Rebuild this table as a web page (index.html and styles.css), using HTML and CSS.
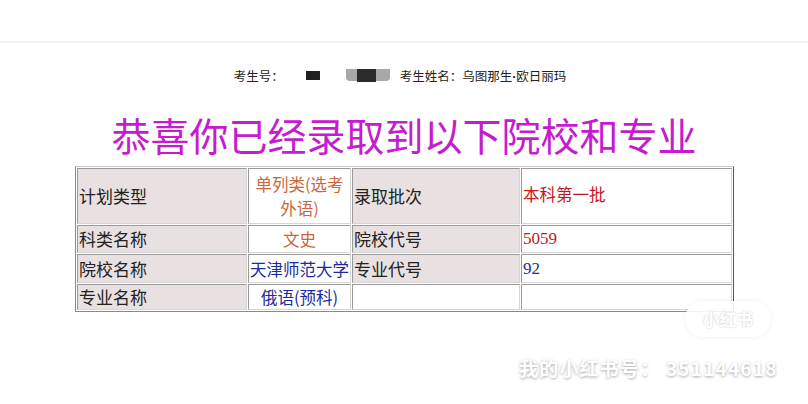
FILE: index.html
```html
<!DOCTYPE html>
<html lang="zh-CN">
<head>
<meta charset="utf-8">
<link rel="stylesheet" href="styles.css">
</head>
<body>
<div class="topbar"></div>
<div class="info">
  <span class="lbl">考生号：</span>
  <span class="redact-a"></span>
  <span class="redact-b"><i></i></span>
  <span class="lbl">考生姓名：乌图那生<span class="dot">·</span>欧日丽玛</span>
</div>
<h1 class="title">恭喜你已经录取到以下院校和专业</h1>
<table class="result">
  <tr class="r1">
    <td class="key w1">计划类型</td>
    <td class="val orange w2">单列类(选考外语)</td>
    <td class="key w3">录取批次</td>
    <td class="val2 red w4">本科第一批</td>
  </tr>
  <tr class="r2">
    <td class="key">科类名称</td>
    <td class="val orange">文史</td>
    <td class="key">院校代号</td>
    <td class="val2 red num">5059</td>
  </tr>
  <tr class="r3">
    <td class="key">院校名称</td>
    <td class="val blue">天津师范大学</td>
    <td class="key">专业代号</td>
    <td class="val2 blue num">92</td>
  </tr>
  <tr class="r4">
    <td class="key">专业名称</td>
    <td class="val blue">俄语(预科)</td>
    <td class="val"></td>
    <td class="val2"></td>
  </tr>
</table>
<div class="wm-pill">小红书</div>
<div class="wm-text">我的小红书号： 351144618</div>
</body>
</html>
```

FILE: styles.css
```css
html, body {
  margin: 0;
  padding: 0;
  background: #fff;
}
body {
  width: 808px;
  height: 404px;
  overflow: hidden;
  position: relative;
  font-family: "Liberation Serif", "Noto Sans CJK SC", serif;
}
.topbar {
  height: 41px;
  border-bottom: 2px solid #f2f2f2;
}
.info {
  margin-top: 22px;
  display: flex;
  align-items: center;
  justify-content: center;
  height: 20px;
  font-family: "Noto Sans CJK SC", sans-serif;
  font-size: 12.5px;
  color: #222;
  padding-right: 8px;
}
.lbl { white-space: nowrap; }
.dot {
  font-family: "Liberation Sans", sans-serif;
  font-weight: 700;
}
.redact-a {
  display: inline-block;
  width: 14px;
  height: 9px;
  background: #1e1e1e;
  margin-left: 22px;
}
.redact-b {
  display: inline-block;
  width: 44px;
  height: 12px;
  background: #a8a8a8;
  margin-left: 26px;
  margin-right: 10px;
  position: relative;
  border-radius: 0 0 4px 4px;
}
.redact-b i {
  position: absolute;
  left: 11px;
  top: 0;
  width: 19px;
  height: 13px;
  background: #2c2c2c;
}
.title {
  margin: 21px 0 0 0;
  text-align: center;
  font-family: "Noto Sans CJK SC", sans-serif;
  font-weight: 400;
  font-size: 39px;
  line-height: 56px;
  color: #c51ccf;
}
.result {
  margin: 4px 0 0 75px;
  width: 659px;
  table-layout: fixed;
  border-collapse: separate;
  border-spacing: 1px;
  border: 1px solid;
  border-color: #c8c8c8 #555 #888 #888;
  background: #fff;
  font-size: 16.5px;
}
.result td {
  box-sizing: border-box;
  border: 1px solid;
  border-color: #9a9a9a #d6d6d6 #d6d6d6 #9a9a9a;
  padding: 0 1px;
  line-height: 24px;
  vertical-align: middle;
  overflow: hidden;
}
.result td.w1 { width: 170px; }
.result td.w2 { width: 103px; }
.result td.w3 { width: 168px; }
.result td.w4 { width: 211px; }
.r1 td { height: 56px; }
.r2 td { height: 28px; }
.r3 td { height: 29px; }
.r4 td { height: 26px; }
.key {
  background: #e9e1e1;
  color: #222;
  font-family: "Noto Sans CJK SC", sans-serif;
  font-size: 17px;
}
.val {
  text-align: center;
  font-family: "Noto Sans CJK SC", sans-serif;
}
.val2 {
  text-align: left;
  font-family: "Liberation Serif", "Noto Sans CJK SC", serif;
}
.orange { color: #cc6640; }
.red { color: #c4161c; }
.blue { color: #1c2aa0; }
.num { font-size: 17px; }
.wm-pill {
  position: absolute;
  left: 685px;
  top: 301px;
  width: 86px;
  height: 36px;
  border-radius: 18px;
  background: rgba(255,255,255,0.9);
  box-shadow: 0 0 4px rgba(0,0,0,0.08);
  color: #fff;
  font-family: "Noto Sans CJK SC", sans-serif;
  font-weight: 700;
  font-size: 17px;
  line-height: 36px;
  text-align: center;
  text-shadow: 0 0 2px rgba(0,0,0,0.25);
}
.wm-text {
  position: absolute;
  left: 519px;
  top: 356px;
  color: #fff;
  font-family: "Noto Sans CJK SC", sans-serif;
  font-weight: 700;
  font-size: 19px;
  letter-spacing: 1.2px;
  line-height: 24px;
  white-space: nowrap;
  text-shadow: 0 1px 3px rgba(0,0,0,0.35);
}
```
